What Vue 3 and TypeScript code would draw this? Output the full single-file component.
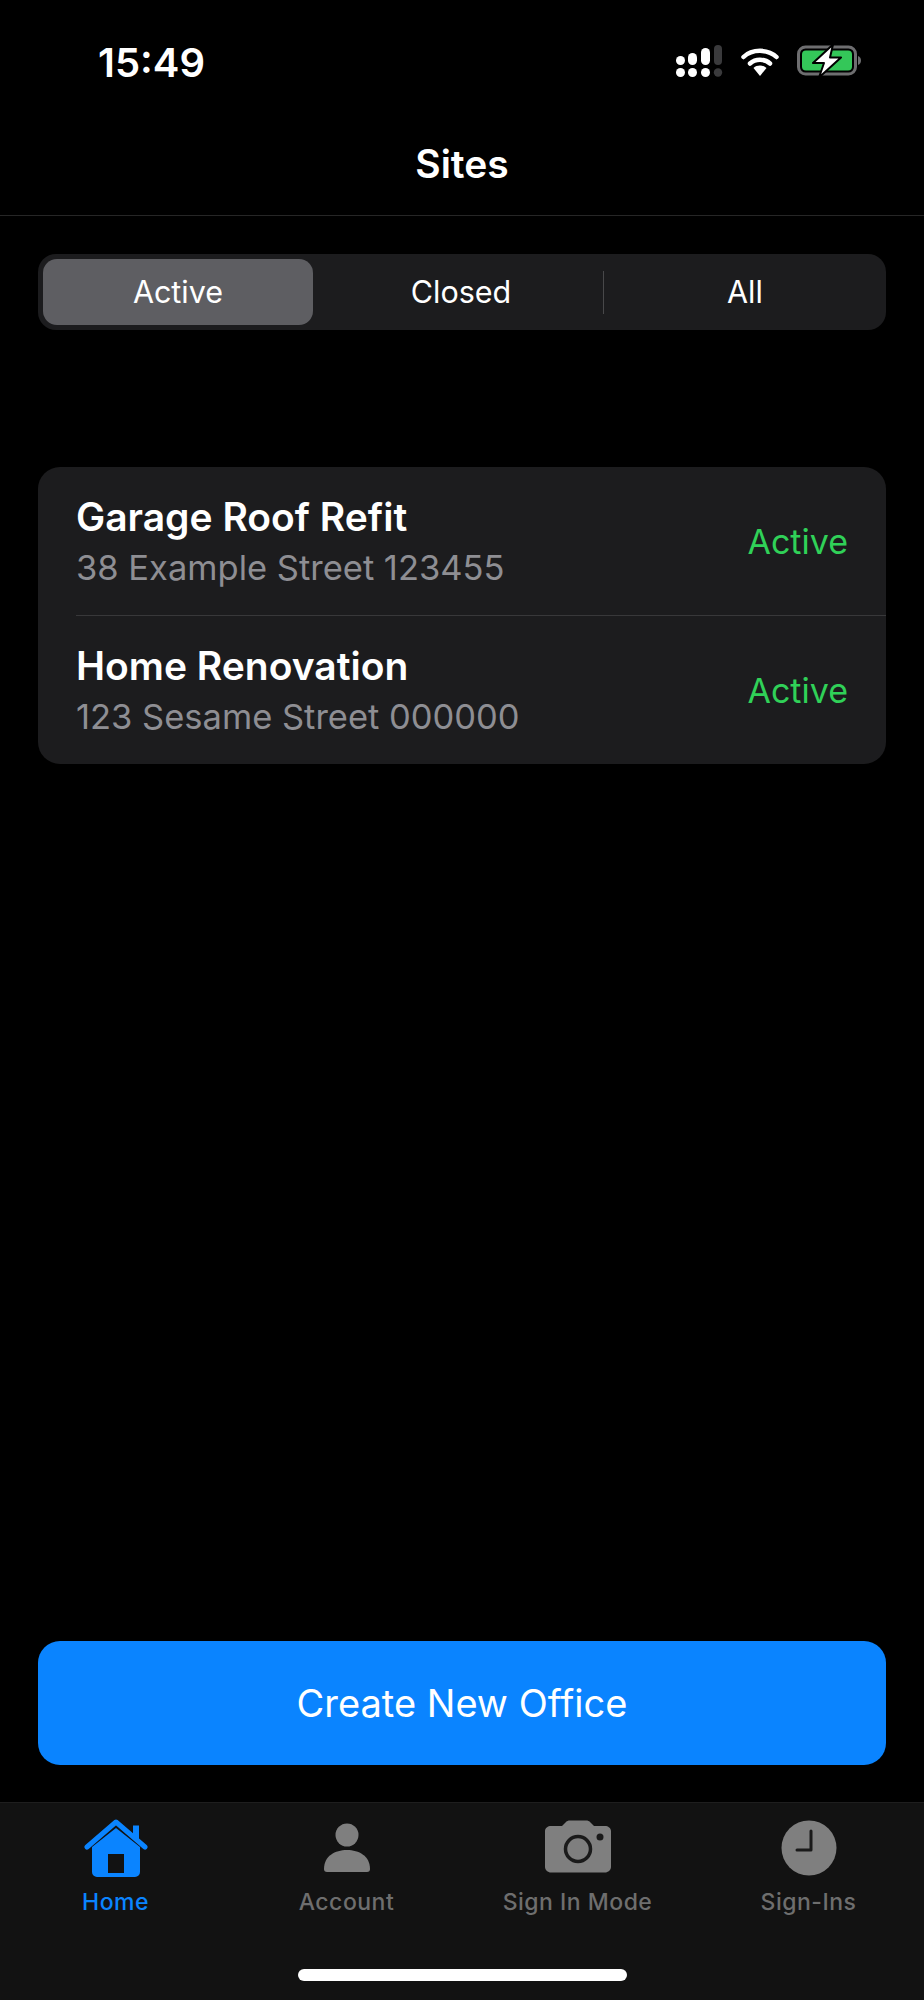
<script setup lang="ts">
const sites = [
  { name: 'Garage Roof Refit', address: '38 Example Street 123455', status: 'Active' },
  { name: 'Home Renovation', address: '123 Sesame Street 000000', status: 'Active' },
]
</script>

<template>
  <div class="page">
    <div class="status">
      <span class="time">15:49</span>
      <div class="status-icons">
        <svg width="47" height="33" viewBox="0 0 47 33">
          <g fill="#fff">
            <rect x="0" y="11" width="9" height="9" rx="4.5" />
            <rect x="12" y="8" width="9" height="12" rx="4.5" />
            <rect x="25" y="3" width="9" height="17" rx="4.500" />
            <circle cx="4.500" cy="27.500" r="4.500" />
            <circle cx="16.500" cy="27.500" r="4.500" />
            <circle cx="29.500" cy="27.500" r="4.500" />
          </g>
          <rect x="38" y="0" width="8" height="20" rx="4" fill="#3a3a3c" />
          <circle cx="42" cy="27.500" r="4.200" fill="#3a3a3c" />
        </svg>
        <svg width="38" height="28" viewBox="0 0 38 28">
          <path d="M2.500 9 C11 0.800 27 0.800 35.500 9" fill="none" stroke="#fff" stroke-width="4.500" stroke-linecap="round" />
          <path d="M9 15.500 C14.500 10.500 23.500 10.500 29 15.500" fill="none" stroke="#fff" stroke-width="4.500" stroke-linecap="round" />
          <path d="M12.500 20 C16 16.800 22 16.800 25.500 20 L19 28 Z" fill="#fff" />
        </svg>
        <svg width="65" height="34" viewBox="0 0 65 34">
          <rect x="1.500" y="3" width="57" height="27" rx="7" fill="none" stroke="#6e6e70" stroke-width="3" />
          <rect x="5" y="6.500" width="50" height="20" rx="4" fill="#34c759" />
          <path d="M61 12 C65 13 65 20 61 21 Z" fill="#6e6e70" />
          <path d="M36 0.500 L16 19 H27 L22 33.500 L44 13.500 H33 Z" fill="#fff" stroke="#000" stroke-width="2" stroke-linejoin="round" />
        </svg>
      </div>
    </div>

    <header class="nav">Sites</header>

    <div class="segment">
      <div class="seg seg-active">Active</div>
      <div class="seg seg-closed">Closed</div>
      <div class="seg-divider"></div>
      <div class="seg seg-all">All</div>
    </div>

    <div class="card">
      <div v-for="site in sites" :key="site.name" class="row">
        <div class="row-main">
          <div class="name">{{ site.name }}</div>
          <div class="address">{{ site.address }}</div>
        </div>
        <div class="state">{{ site.status }}</div>
      </div>
    </div>

    <div class="spacer"></div>

    <button class="cta">Create New Office</button>

    <nav class="tabs">
      <div class="tab tab-on">
        <svg width="66" height="60" viewBox="0 0 66 60">
          <path d="M9 28 V53 a5 5 0 0 0 5 5 H52 a5 5 0 0 0 5 -5 V28 L33 9 Z M25 35 H41 V54 H25 Z" fill="#0a84ff" fill-rule="evenodd" />
          <path d="M4 28 L33 3 L62 28" fill="none" stroke="#0a84ff" stroke-width="5" stroke-linecap="round" stroke-linejoin="round" />
          <rect x="50" y="6.500" width="6" height="14" fill="#0a84ff" />
        </svg>
        <span>Home</span>
      </div>
      <div class="tab">
        <svg width="66" height="60" viewBox="0 0 66 60">
          <circle cx="33" cy="16" r="11.500" fill="#7f7f7f" />
          <path d="M10 50 C10 37 21 31 33 31 C45 31 56 37 56 50 C56 52 55 53 53 53 H13 C11 53 10 52 10 50 Z" fill="#7f7f7f" />
        </svg>
        <span>Account</span>
      </div>
      <div class="tab">
        <svg width="66" height="60" viewBox="0 0 66 60">
          <path d="M6 7 H17 L21 3 C22 2 23 1.500 25 1.500 H41 C43 1.500 44 2 45 3 L49 7 H60 C63 7 66 9 66 12 V48 C66 51 63 53.500 60 53.500 H6 C3 53.500 0 51 0 48 V12 C0 9 3 7 6 7 Z" fill="#7f7f7f" />
          <circle cx="33" cy="30" r="12.500" fill="none" stroke="#1a1a1a" stroke-width="3.500" />
          <circle cx="55" cy="18" r="3.500" fill="#1a1a1a" />
        </svg>
        <span>Sign In Mode</span>
      </div>
      <div class="tab">
        <svg width="66" height="60" viewBox="0 0 66 60">
          <circle cx="33" cy="29" r="27.500" fill="#7f7f7f" />
          <path d="M35 12 V31 H21" fill="none" stroke="#1a1a1a" stroke-width="3" stroke-linecap="round" stroke-linejoin="round" />
        </svg>
        <span>Sign-Ins</span>
      </div>
    </nav>

    <div class="home-zone">
      <div class="home-bar"></div>
    </div>
  </div>
</template>

<style scoped>
.page {
  width: 924px;
  height: 2000px;
  background: #000;
  color: #fff;
  display: flex;
  flex-direction: column;
  font-family: Inter, "Liberation Sans", sans-serif;
}
.status {
  height: 124px;
  box-sizing: border-box;
  padding: 41px 62px 0 98px;
  display: flex;
  justify-content: space-between;
  align-items: flex-start;
}
.time {
  font-size: 40px;
  font-weight: 600;
  line-height: 44px;
  letter-spacing: 0;
}
.status-icons {
  display: flex;
  align-items: flex-start;
  gap: 18px;
  margin-top: 4px;
}
.status-icons svg:nth-child(2) {
  margin-top: 3px;
}
.status-icons svg:nth-child(3) {
  margin-top: -1px;
}
.nav {
  height: 92px;
  box-sizing: border-box;
  border-bottom: 1px solid #262626;
  font-size: 39px;
  font-weight: 600;
  text-align: center;
  line-height: 80px;
}
.segment {
  margin: 38px 38px 0;
  height: 76px;
  background: #1c1c1e;
  border-radius: 18px;
  display: flex;
  align-items: center;
  padding: 0 5px;
  flex: none;
  font-size: 30.500px;
  font-weight: 400;
}
.seg {
  text-align: center;
  line-height: 66px;
}
.seg-active {
  width: 270px;
  height: 66px;
  background: #5e5e62;
  border-radius: 14px;
}
.seg-closed {
  width: 290px;
  padding-left: 6px;
  box-sizing: border-box;
}
.seg-divider {
  width: 1px;
  height: 43px;
  background: #48484a;
}
.seg-all {
  flex: 1;
  padding-left: 5px;
}
.card {
  margin: 137px 38px 0;
  background: #1c1c1e;
  border-radius: 22px;
  flex: none;
}
.row {
  margin-left: 38px;
  padding-right: 38px;
  height: 148px;
  box-sizing: border-box;
  display: flex;
  align-items: center;
  justify-content: space-between;
}
.row + .row {
  height: 149px;
  border-top: 1px solid #38383a;
}
.name {
  font-size: 39px;
  font-weight: 600;
  line-height: 44px;
}
.address {
  font-size: 34.500px;
  line-height: 40px;
  color: #8e8e93;
  margin-top: 9px;
}
.state {
  font-size: 34px;
  color: #30d158;
}
.spacer {
  flex: 1;
}
.cta {
  margin: 0 38px;
  height: 124px;
  background: #0a84ff;
  color: #fff;
  border: 0;
  border-radius: 22px;
  font-family: inherit;
  font-size: 38px;
  flex: none;
}
.tabs {
  margin-top: 37px;
  height: 132px;
  box-sizing: border-box;
  background: #121212;
  border-top: 1px solid #1e1e1e;
  display: grid;
  grid-template-columns: repeat(4, 1fr);
  flex: none;
  padding-top: 16px;
}
.tab {
  display: flex;
  flex-direction: column;
  align-items: center;
  color: #6e6e6e;
  font-size: 23px;
  font-weight: 500;
  letter-spacing: 0.5px;
  line-height: 28px;
  gap: 9px;
}
.tab-on {
  color: #0a84ff;
}
.home-zone {
  height: 66px;
  background: #121212;
  box-sizing: border-box;
  padding-top: 35px;
  flex: none;
}
.home-bar {
  width: 329px;
  height: 12px;
  border-radius: 6px;
  background: #fff;
  margin: 0 auto;
}
</style>
